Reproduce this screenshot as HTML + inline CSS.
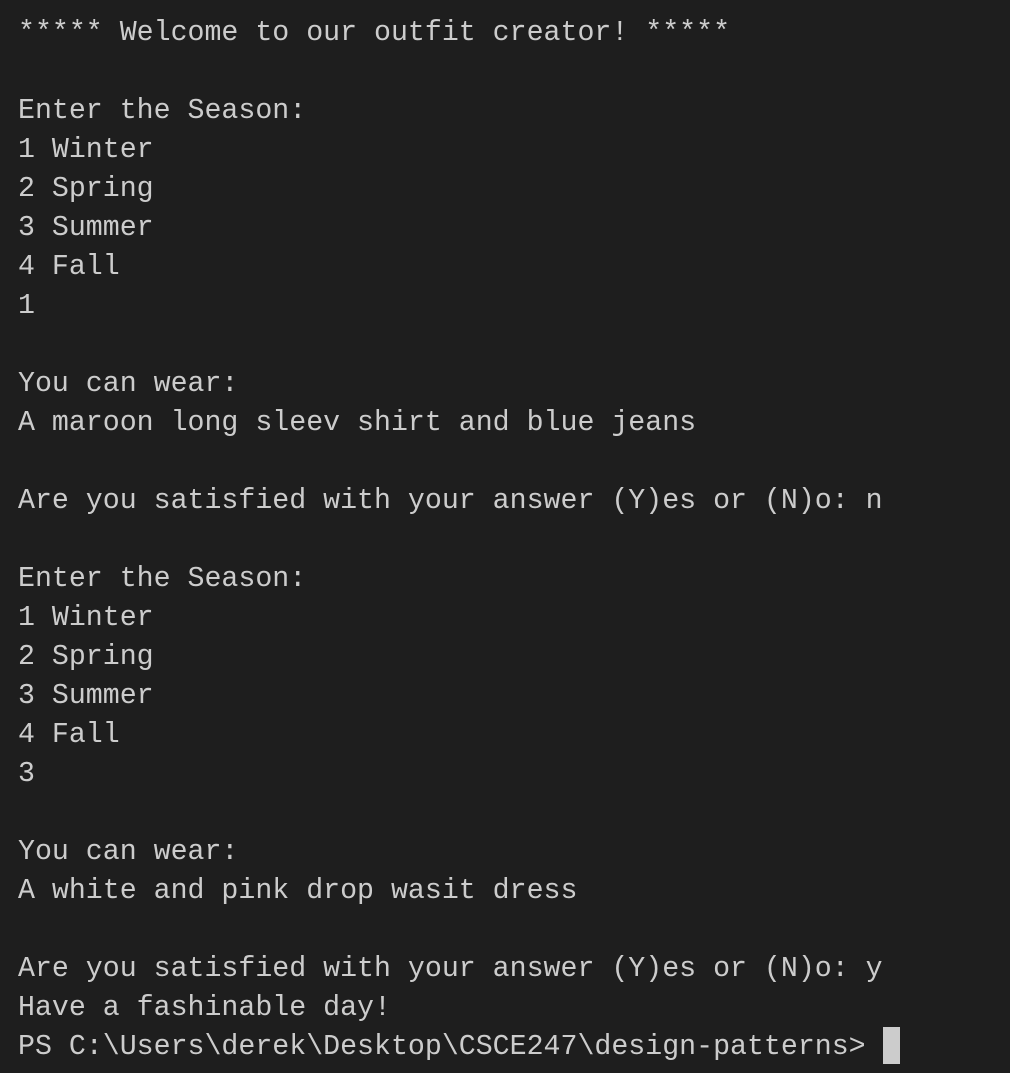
<!DOCTYPE html>
<html><head><meta charset="utf-8"><style>
html,body{margin:0;padding:0;background:#1e1e1e;width:1010px;height:1073px;overflow:hidden}
pre{margin:0;position:absolute;left:18px;top:14px;font-family:"Liberation Mono",monospace;font-size:28.25px;line-height:39px;color:#cccccc;white-space:pre}
.cur{display:inline-block;width:17px;height:37px;background:#cccccc;vertical-align:top;margin-top:-1px}
</style></head><body>
<pre>***** Welcome to our outfit creator! *****

Enter the Season:
1 Winter
2 Spring
3 Summer
4 Fall
1

You can wear:
A maroon long sleev shirt and blue jeans

Are you satisfied with your answer (Y)es or (N)o: n

Enter the Season:
1 Winter
2 Spring
3 Summer
4 Fall
3

You can wear:
A white and pink drop wasit dress

Are you satisfied with your answer (Y)es or (N)o: y
Have a fashinable day!
PS C:\Users\derek\Desktop\CSCE247\design-patterns> <span class="cur"></span></pre>
</body></html>
